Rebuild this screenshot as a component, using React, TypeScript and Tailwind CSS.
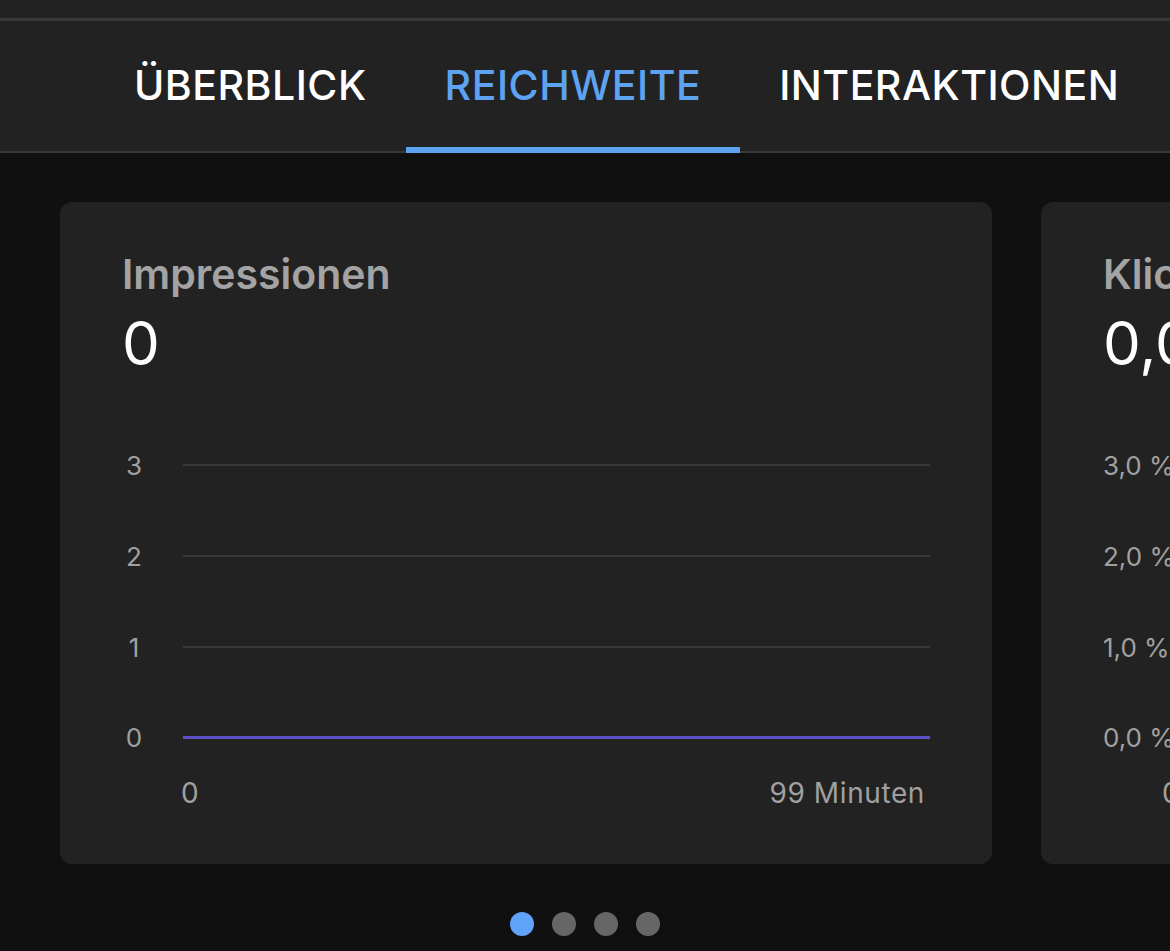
import React from 'react'

const font = { fontFamily: 'Inter, "Noto Sans", sans-serif' }

const tabs = ['ÜBERBLICK', 'REICHWEITE', 'INTERAKTIONEN']

function Tabs({ active }: { active: number }) {
  return (
    <div className="border-t-[3px] border-b-[2px] border-[#383838] bg-[#222222]">
      <div className="flex h-[130px] pl-[95px]">
        {tabs.map((t, i) => (
          <div key={t} className="relative flex items-center px-[39px]">
            <span
              className={
                'text-[41px] font-medium tracking-[0.5px] ' +
                (i === active ? 'text-[#5ea3f2]' : 'text-white')
              }
            >
              {t}
            </span>
            {i === active && (
              <div className="absolute right-0 bottom-[-2px] left-0 h-[6px] bg-[#5ea3f2]" />
            )}
          </div>
        ))}
      </div>
    </div>
  )
}

function ChartCard({
  title,
  value,
  ticks,
  xStart,
  xEnd,
}: {
  title: string
  value: string
  ticks: string[]
  xStart: string
  xEnd: string
}) {
  return (
    <div className="flex h-[662px] w-[932px] shrink-0 flex-col rounded-[12px] bg-[#222222] pt-[48px] pr-[62px] pl-[62px]">
      <div className="text-[41px] leading-[48px] font-semibold whitespace-nowrap text-[#a3a3a3]">{title}</div>
      <div className="mt-[11px] text-[60px] leading-[68px] font-normal whitespace-nowrap text-white">{value}</div>
      <div className="mt-[43px] flex flex-col">
        {ticks.map((t, i) => (
          <div
            key={t}
            className={'flex items-center ' + (i === 1 ? 'h-[92px]' : 'h-[90px]')}
          >
            <div className="min-w-[24px] text-center text-[26px] whitespace-nowrap text-[#a0a0a0]">{t}</div>
            <div
              className={
                'ml-[37px] flex-1 ' +
                (i === ticks.length - 1 ? 'h-[3px] bg-[#5b50c6]' : 'h-[2px] bg-[#383838]')
              }
            />
          </div>
        ))}
      </div>
      <div className="mt-[-10px] flex justify-between pr-[5px] pl-[59px] text-[28px] tracking-[0.6px] whitespace-nowrap text-[#a0a0a0]">
        <span>{xStart}</span>
        <span>{xEnd}</span>
      </div>
    </div>
  )
}

export default function App() {
  return (
    <div className="flex h-[951px] w-[1170px] flex-col overflow-hidden bg-[#101010]" style={font}>
      <div className="h-[18px] bg-[#222222]" />
      <Tabs active={1} />
      <div className="flex gap-[49px] overflow-hidden pt-[49px] pl-[60px]">
        <ChartCard
          title="Impressionen"
          value="0"
          ticks={['3', '2', '1', '0']}
          xStart="0"
          xEnd="99 Minuten"
        />
        <ChartCard
          title="Klickrate"
          value="0,0 %"
          ticks={['3,0 %', '2,0 %', '1,0 %', '0,0 %']}
          xStart="0"
          xEnd="99 Minuten"
        />
      </div>
      <div className="mt-[48px] flex justify-center gap-[18px]">
        <div className="h-[24px] w-[24px] rounded-full bg-[#5ea3f8]" />
        <div className="h-[24px] w-[24px] rounded-full bg-[#666666]" />
        <div className="h-[24px] w-[24px] rounded-full bg-[#666666]" />
        <div className="h-[24px] w-[24px] rounded-full bg-[#666666]" />
      </div>
    </div>
  )
}
